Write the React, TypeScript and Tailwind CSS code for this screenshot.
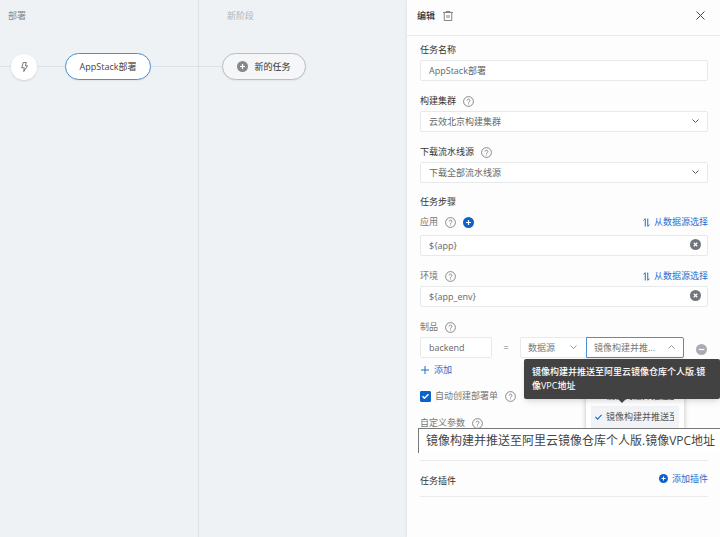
import { useState } from "react";
import type { ReactNode } from "react";
import clsx from "clsx";

const ARTIFACT = "镜像构建并推送至阿里云镜像仓库个人版.镜像VPC地址";

function HelpIcon() {
  return (
    <svg viewBox="0 0 22 22" className="size-[11px] shrink-0" fill="none" stroke="#777" strokeWidth="1.7">
      <circle cx="11" cy="11" r="9.8" />
      <path d="M8.2 9a2.8 2.8 0 1 1 4.3 2.3c-1 .6-1.5 1-1.5 2.2" />
      <path d="M11 15v1.8" />
    </svg>
  );
}

function CirclePlus({ className }: { className: string }) {
  return (
    <svg viewBox="0 0 22 22" className={clsx("shrink-0", className)}>
      <circle cx="11" cy="11" r="11" fill="currentColor" />
      <path d="M11 6v10M6 11h10" stroke="#fff" strokeWidth="2.4" />
    </svg>
  );
}

function TrashIcon() {
  return (
    <svg viewBox="0 0 20 20" className="size-[10px]" fill="none" stroke="#777" strokeWidth="1.8">
      <path d="M0 3h20M6 3V1h8v2M2.500 3v16h15V3M8 8v6M12 8v6" />
    </svg>
  );
}

function Chevron({ up = false, className }: { up?: boolean; className: string }) {
  return (
    <svg
      viewBox="0 0 14 8"
      className={clsx("pointer-events-none absolute top-2 right-[9px] h-1 w-[7px]", className)}
      fill="none"
      stroke="currentColor"
      strokeWidth="2"
    >
      <path d={up ? "M1 7l6-6 6 6" : "M1 1l6 6 6-6"} />
    </svg>
  );
}

function Label({ text, htmlFor, muted, children }: { text: string; htmlFor?: string; muted?: boolean; children?: ReactNode }) {
  return (
    <div className="flex h-5 items-center gap-[7px]">
      <label htmlFor={htmlFor} className={muted ? "text-[#777]" : "text-[#333]"}>
        {text}
      </label>
      {children}
    </div>
  );
}

function SelectField({ id, label, value }: { id: string; label: string; value: string }) {
  return (
    <div>
      <Label text={label} htmlFor={id}>
        <HelpIcon />
      </Label>
      <div className="relative">
        <select
          id={id}
          className="block h-[21px] w-full appearance-none rounded-xs border border-[#e8e9eb] bg-white px-2 text-[#666] outline-none"
        >
          <option>{value}</option>
        </select>
        <Chevron className="text-[#555]" />
      </div>
    </div>
  );
}

function VariableField({ id, label, initial, extra }: { id: string; label: string; initial: string; extra?: ReactNode }) {
  const [value, setValue] = useState(initial);

  return (
    <div>
      <div className={clsx("flex items-center justify-between", extra && "mb-[3px]")}>
        <Label text={label} htmlFor={id} muted>
          <HelpIcon />
          {extra}
        </Label>
        <button className="flex items-center gap-1 text-[#1b6fd0]">
          <svg viewBox="0 0 14 18" className="h-[9px] w-[7px]" fill="none" stroke="currentColor" strokeWidth="2">
            <path d="M1 4.500L4.500 1.500V17M9.500 1v15.500L13 13.500" />
          </svg>
          从数据源选择
        </button>
      </div>
      <div className="relative">
        <input
          id={id}
          value={value}
          onChange={(e) => setValue(e.target.value)}
          className="block h-[21px] w-full rounded-xs border border-[#e8e9eb] bg-white px-2 text-[#666] outline-none"
        />
        <button aria-label="清除" onClick={() => setValue("")} className="absolute top-1 right-[7px]">
          <svg viewBox="0 0 22 22" className="size-[11px]">
            <circle cx="11" cy="11" r="11" fill="#70757b" />
            <path d="M7.500 7.500l7 7M14.500 7.500l-7 7" stroke="#fff" strokeWidth="2.400" />
          </svg>
        </button>
      </div>
    </div>
  );
}

function ArtifactRow() {
  return (
    <div className="flex items-center">
      <input
        id="artifact"
        defaultValue="backend"
        className="h-[21px] w-[72px] rounded-xs border border-[#e8e9eb] bg-white px-2 text-[#666] outline-none"
      />
      <span className="flex-1 text-center text-[#777]">=</span>
      <div className="relative">
        <select
          aria-label="类型"
          className="block h-[21px] w-[66px] appearance-none rounded-l-xs border border-r-0 border-[#e8e9eb] bg-white px-[7px] text-[#777] outline-none"
        >
          <option>数据源</option>
        </select>
        <Chevron className="text-[#999]" />
      </div>
      <div className="relative">
        <select
          aria-label="制品来源"
          className="block h-[21px] w-[98px] appearance-none rounded-r-xs border border-[#4a8ed4] bg-white px-[7px] text-[#777] outline-none"
        >
          <option>镜像构建并推...</option>
        </select>
        <Chevron up className="text-[#999]" />

        {/* open option list */}
        <ul className="absolute top-[22px] left-0 flex h-20 w-[98px] flex-col bg-white px-[5px] pt-[27px] text-[#555] shadow-[0_1px_5px_rgba(0,0,0,0.25)]">
          <li className="flex h-5 items-center overflow-hidden pr-[5px] pl-[15px]">
            <span className="overflow-hidden whitespace-nowrap">{ARTIFACT}</span>
          </li>
          <li className="flex h-[22px] shrink-0 items-center overflow-hidden bg-[#f1f3f6] pr-[5px]">
            <svg viewBox="0 0 16 12" className="mx-1 h-[6px] w-[7px] shrink-0" fill="none" stroke="#1b6fd0" strokeWidth="2.600">
              <path d="M1 6l5 5 9-10" />
            </svg>
            <span className="overflow-hidden whitespace-nowrap">{ARTIFACT}</span>
          </li>
        </ul>

        <div
          role="tooltip"
          className="absolute top-[22px] -left-[62px] z-10 w-[196px] rounded-xs bg-[#424242] px-2 py-1.5 leading-[14px] font-medium break-all text-white shadow-md"
        >
          {ARTIFACT}
          <span className="absolute top-full left-[94px] border-x-4 border-t-4 border-x-transparent border-t-[#424242]" />
        </div>
      </div>
      <button aria-label="删除" className="mt-1 mr-px ml-3">
        <svg viewBox="0 0 22 22" className="size-[11px]">
          <circle cx="11" cy="11" r="11" fill="#a9adb3" />
          <path d="M5.500 11h11" stroke="#fff" strokeWidth="2.400" />
        </svg>
      </button>
    </div>
  );
}

function Canvas() {
  return (
    <main className="flex flex-1 bg-[#eef2f5]">
      <section className="w-[199px] border-r border-[#dce1e7]">
        <h2 className="px-2 pt-2 leading-4 text-[#888]">部署</h2>
        <div className="mt-[29px] flex items-center">
          <span className="h-px w-[11px] bg-[#dce1e7]" />
          <button aria-label="触发" className="flex size-[26px] items-center justify-center rounded-full bg-white shadow-sm">
            <svg viewBox="0 0 14 20" className="h-[10px] w-[7px]" fill="none" stroke="#555" strokeWidth="1.600" strokeLinejoin="round">
              <path d="M4.500 1h6L8.800 7.500H13L5.500 19l1-7.500H1.500z" />
            </svg>
          </button>
          <span className="h-px w-7 bg-[#dce1e7]" />
          <button className="h-[27px] w-[86px] rounded-full border border-[#4a8ed4] bg-white text-[#444] shadow-xs">
            AppStack部署
          </button>
          <span className="h-px flex-1 bg-[#dce1e7]" />
        </div>
      </section>
      <section className="flex-1">
        <h2 className="px-7 pt-2 leading-4 text-[#b0b4b8]">新阶段</h2>
        <div className="mt-[29px] flex items-center">
          <span className="h-px w-[23px] bg-[#dce1e7]" />
          <button className="flex h-[27px] w-[84px] items-center justify-center gap-1.5 rounded-full border border-[#b9bcc0] bg-[#f4f6f8] text-[#333] shadow-xs">
            <CirclePlus className="size-[11px] text-[#888]" />
            新的任务
          </button>
        </div>
      </section>
    </main>
  );
}

function Drawer() {
  return (
    <aside className="w-[313px] bg-[#fdfdfd] shadow-[-1px_0_3px_rgba(0,0,0,0.06)]">
      <header className="flex h-9 items-center border-b border-[#e8e9eb] pr-[15px] pb-1 pl-2.5">
        <h1 className="mr-2 font-medium text-[#333]">编辑</h1>
        <button aria-label="删除任务">
          <TrashIcon />
        </button>
        <button aria-label="关闭" className="ml-auto">
          <svg viewBox="0 0 18 18" className="size-[9px]" stroke="#444" strokeWidth="2">
            <path d="M1 1l16 16M17 1L1 17" />
          </svg>
        </button>
      </header>

      <div className="pt-1 pr-3 pl-[13px]">
        <div className="flex flex-col gap-2.5">
          <div>
            <Label text="任务名称" htmlFor="task-name" />
            <input
              id="task-name"
              defaultValue="AppStack部署"
              className="block h-[21px] w-full rounded-xs border border-[#e8e9eb] bg-white px-2 text-[#666] outline-none"
            />
          </div>
          <SelectField id="cluster" label="构建集群" value="云效北京构建集群" />
          <SelectField id="source" label="下载流水线源" value="下载全部流水线源" />
        </div>

        <h2 className="mt-[9px] h-5 leading-5 text-[#333]">任务步骤</h2>
        <div className="flex flex-col gap-2.5">
          <VariableField
            id="app"
            label="应用"
            initial="${app}"
            extra={
              <button aria-label="添加应用">
                <CirclePlus className="size-[11px] text-[#0b62cc]" />
              </button>
            }
          />
          <VariableField id="env" label="环境" initial="${app_env}" />
          <div>
            <Label text="制品" htmlFor="artifact" muted>
              <HelpIcon />
            </Label>
            <ArtifactRow />
          </div>
        </div>
        <button className="flex h-6 items-center gap-1 text-[#1b6fd0]">
          <svg viewBox="0 0 16 16" className="mx-px size-2" stroke="currentColor" strokeWidth="2">
            <path d="M8 0v16M0 8h16" />
          </svg>
          添加
        </button>

        <div className="mt-1 flex h-5 items-center gap-[7px]">
          <label className="relative flex items-center gap-1">
            <input type="checkbox" defaultChecked className="peer size-[11px] appearance-none rounded-[1px] border border-[#0b62cc] checked:bg-[#0b62cc]" />
            <svg
              viewBox="0 0 14 10"
              className="pointer-events-none absolute left-[2px] hidden h-[5px] w-[7px] peer-checked:block"
              fill="none"
              stroke="#fff"
              strokeWidth="3"
            >
              <path d="M1 4.500l4 4 8-8" />
            </svg>
            <span className="text-[#777]">自动创建部署单</span>
          </label>
          <HelpIcon />
        </div>

        <div className="relative mt-[7px] h-12 border-b border-[#ececee]">
          <Label text="自定义参数" muted>
            <HelpIcon />
          </Label>
          {/* full name of the hovered option */}
          <div className="absolute top-[15px] -right-3 -left-[2px] z-20 h-[25px] border-t border-l border-[#777] bg-white pl-[7px] text-[12px] leading-6 whitespace-nowrap text-[#444]">
            {ARTIFACT}
          </div>
        </div>

        <div className="flex h-9 items-center justify-between border-b border-[#ececee]">
          <h2 className="pt-1 text-[#333]">任务插件</h2>
          <button className="flex items-center gap-1 text-[#1b6fd0]">
            <CirclePlus className="size-[9px] text-[#0b62cc]" />
            添加插件
          </button>
        </div>
      </div>
    </aside>
  );
}

export default function App() {
  return (
    <div className="flex min-h-screen overflow-hidden font-['Open_Sans','Noto_Sans_CJK_SC',sans-serif] text-[9px] leading-[14px]">
      <Canvas />
      <Drawer />
    </div>
  );
}
